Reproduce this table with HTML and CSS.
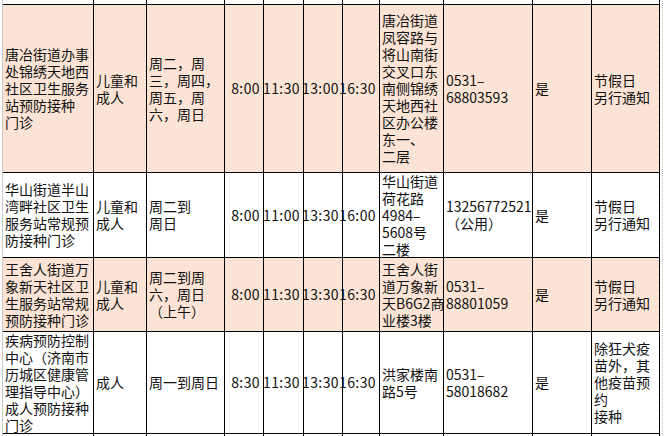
FILE: index.html
```html
<!DOCTYPE html>
<html lang="zh-CN">
<head>
<meta charset="utf-8">
<title>预防接种门诊</title>
<link rel="stylesheet" href="styles.css">
</head>
<body>
<div class="page">
  <div class="sheet">
    <div class="row">
      <div class="c"></div><div class="c"></div><div class="c"></div><div class="c"></div><div class="c"></div><div class="c"></div><div class="c"></div>
      <div class="c bottom"><div>层</div></div>
      <div class="c"></div><div class="c"></div><div class="c"></div>
    </div>

    <div class="row peach">
      <div class="c"><div>唐冶街道办事<br>处锦绣天地西<br>社区卫生服务<br>站预防接种<br>门诊</div></div>
      <div class="c"><div>儿童和<br>成人</div></div>
      <div class="c"><div>周二，周<br>三，周四，<br>周五，周<br>六，周日</div></div>
      <div class="c num">8:00</div>
      <div class="c num">11:30</div>
      <div class="c num">13:00</div>
      <div class="c num">16:30</div>
      <div class="c"><div>唐冶街道<br>凤容路与<br>将山南街<br>交叉口东<br>南侧锦绣<br>天地西社<br>区办公楼<br>东一、<br>二层</div></div>
      <div class="c"><div>0531–<br>68803593</div></div>
      <div class="c"><div>是</div></div>
      <div class="c"><div>节假日<br>另行通知</div></div>
    </div>

    <div class="row">
      <div class="c"><div>华山街道半山<br>湾畔社区卫生<br>服务站常规预<br>防接种门诊</div></div>
      <div class="c"><div>儿童和<br>成人</div></div>
      <div class="c"><div>周二到<br>周日</div></div>
      <div class="c num">8:00</div>
      <div class="c num">11:00</div>
      <div class="c num">13:30</div>
      <div class="c num">16:00</div>
      <div class="c"><div>华山街道<br>荷花路<br>4984–<br>5608号<br>二楼</div></div>
      <div class="c"><div>13256772521<br>（公用）</div></div>
      <div class="c"><div>是</div></div>
      <div class="c"><div>节假日<br>另行通知</div></div>
    </div>

    <div class="row peach">
      <div class="c"><div>王舍人街道万<br>象新天社区卫<br>生服务站常规<br>预防接种门诊</div></div>
      <div class="c"><div>儿童和<br>成人</div></div>
      <div class="c"><div>周二到周<br>六，周日<br>（上午）</div></div>
      <div class="c num">8:00</div>
      <div class="c num">11:30</div>
      <div class="c num">13:30</div>
      <div class="c num">16:30</div>
      <div class="c"><div>王舍人街<br>道万象新<br>天B6G2商<br>业楼3楼</div></div>
      <div class="c"><div>0531–<br>88801059</div></div>
      <div class="c"><div>是</div></div>
      <div class="c"><div>节假日<br>另行通知</div></div>
    </div>

    <div class="row">
      <div class="c"><div>疾病预防控制<br>中心（济南市<br>历城区健康管<br>理指导中心）<br>成人预防接种<br>门诊</div></div>
      <div class="c"><div>成人</div></div>
      <div class="c"><div>周一到周日</div></div>
      <div class="c num">8:30</div>
      <div class="c num">11:30</div>
      <div class="c num">13:30</div>
      <div class="c num">16:30</div>
      <div class="c"><div>洪家楼南<br>路5号</div></div>
      <div class="c"><div>0531–<br>58018682</div></div>
      <div class="c"><div>是</div></div>
      <div class="c"><div>除狂犬疫<br>苗外，其<br>他疫苗预<br>约<br>接种</div></div>
    </div>

    <div class="row">
      <div class="c"></div><div class="c"></div><div class="c"></div><div class="c"></div><div class="c"></div><div class="c"></div><div class="c"></div><div class="c"></div><div class="c"></div><div class="c"></div><div class="c"></div>
    </div>
  </div>
  <div class="edge"></div>
</div>
</body>
</html>
```

FILE: styles.css
```css
html, body {
  margin: 0;
  padding: 0;
  background: #ffffff;
  overflow: hidden;
}

.page {
  display: flex;
  align-items: stretch;
  padding-left: 2px;
  margin-top: -17px;
  height: 453px;
}

.sheet {
  display: grid;
  grid-template-columns: 91px 53px 78px 39px 40px 39px 37px 64px 89px 59px 68px;
  grid-template-rows: 22px 168px 85px 74px 102px 2px;
  border-left: 1px solid #c9c9c9;
  font-family: "Noto Sans CJK SC", "Noto Sans", sans-serif;
  font-size: 14px;
  line-height: 17px;
  color: #111;
}

.row {
  display: contents;
}

.c {
  box-sizing: border-box;
  border-right: 1px solid #000;
  border-bottom: 1px solid #000;
  display: flex;
  align-items: center;
  padding: 0 1px 0 2px;
  background: #fff;
  white-space: nowrap;
  min-width: 0;
}

.peach > .c {
  background: #fbe4d5;
}

.c.num {
  justify-content: flex-end;
  padding: 0 3px 0 0;
  letter-spacing: 0.4px;
}

.c.bottom {
  align-items: flex-end;
  overflow: hidden;
}

.c.bottom > div {
  margin-bottom: -15px;
}

.row:last-child > .c {
  border-bottom: none;
}

.edge {
  width: 2px;
  border-right: 1px dotted #b8b8b8;
}
```
